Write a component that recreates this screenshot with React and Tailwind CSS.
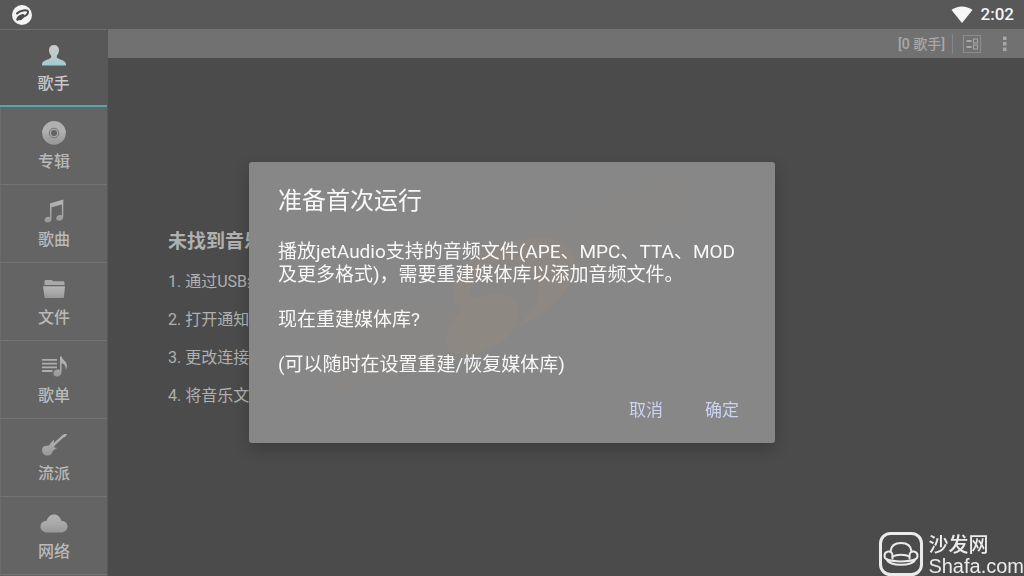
import { useState } from "react";

const tabs = [
  { id: "artists", label: "歌手", Icon: ArtistIcon },
  { id: "albums", label: "专辑", Icon: DiscIcon },
  { id: "songs", label: "歌曲", Icon: SongIcon },
  { id: "folders", label: "文件", Icon: FolderIcon },
  { id: "playlists", label: "歌单", Icon: PlaylistIcon },
  { id: "genres", label: "流派", Icon: GuitarIcon },
  { id: "network", label: "网络", Icon: CloudIcon },
];

const steps = [
  "通过USB线连接电脑",
  "打开通知栏",
  "更改连接方式",
  "将音乐文件复制到设备",
];

function ArtistIcon() {
  return (
    <svg width="28" height="28" viewBox="0 0 28 28" aria-hidden="true">
      <defs>
        <linearGradient id="artist" x1="0" y1="0" x2="0" y2="1">
          <stop offset="0" stopColor="#c6cccc" />
          <stop offset="0.5" stopColor="#bccccd" />
          <stop offset="1" stopColor="#9dcdd0" />
        </linearGradient>
      </defs>
      <path
        fill="url(#artist)"
        d="M14 4c3.100 0 5 2 5 5 0 2.300-.9 4.400-2.200 5.800-.3 1.900.2 2.400 2.200 3.100 3.800 1.300 7 2.700 7 5.300V24.500H2v-1.300c0-2.600 3.200-4 7-5.300 2-.7 2.500-1.200 2.200-3.100C9.900 13.400 9 11.300 9 9c0-3 1.900-5 5-5z"
      />
    </svg>
  );
}

function GreyGradient({ id }) {
  return (
    <defs>
      <linearGradient id={id} x1="0" y1="0" x2="0" y2="1">
        <stop offset="0" stopColor="#b4b4b4" />
        <stop offset="0.5" stopColor="#a9a9a9" />
        <stop offset="1" stopColor="#989898" />
      </linearGradient>
    </defs>
  );
}

function DiscIcon() {
  return (
    <svg width="28" height="28" viewBox="0 0 28 28" aria-hidden="true">
      <GreyGradient id="disc" />
      <circle cx="14" cy="14" r="11.800" fill="url(#disc)" />
      <path d="M2.200 14a11.800 11.800 0 0 1 23.600 0z" fill="#b0b0b0" />
      <circle cx="14" cy="14" r="4.800" fill="#a6a6a6" stroke="#777" />
      <circle cx="14" cy="14" r="3" fill="#626262" />
    </svg>
  );
}

function SongIcon() {
  return (
    <svg width="28" height="28" viewBox="0 0 28 28" aria-hidden="true">
      <GreyGradient id="song" />
      <path
        fill="url(#song)"
        d="M10 6.500 23.300 2.500V20c0 2.300-1.800 3.700-4 3.700-1.900 0-3.100-1-3.100-2.500 0-2 1.900-3.300 4-3.300.6 0 1.200.1 1.700.3V7.500L11.500 10.300V22c0 2.200-1.900 3.500-4 3.500-1.800 0-3-.9-3-2.400 0-2 1.900-3.300 3.900-3.300.6 0 1.100.1 1.600.3z"
      />
    </svg>
  );
}

function FolderIcon() {
  return (
    <svg width="28" height="28" viewBox="0 0 28 28" aria-hidden="true">
      <GreyGradient id="folder" />
      <path
        fill="#a9a9a9"
        d="M4.500 10V6.500c0-1 .5-1.500 1.500-1.500h5.500c1 0 1 1.300 2 1.300h9c1.500 0 2 .5 2 1.700v2z"
      />
      <path fill="url(#folder)" d="M3 11.200h22L24 22c-.1.800-.5 1-1.300 1H5.800c-.8 0-1.200-.2-1.300-1z" />
    </svg>
  );
}

function PlaylistIcon() {
  return (
    <svg width="28" height="28" viewBox="0 0 28 28" aria-hidden="true">
      <GreyGradient id="playlist" />
      <path d="M2 6h15v1.800H2zM2 9.700h15v1.800H2zM2 13.400h15v1.800H2zM2 17.100h10.500v1.800H2z" fill="#adadad" />
      <path
        fill="url(#playlist)"
        d="M20 3.500h1.600c.5 3.500 5.400 4.500 5.400 9 0 1.600-.5 3-1.400 4.200.5-4-1.600-5.900-4-6.800V19c0 2.600-2.200 4.500-4.700 4.500-2.100 0-3.500-1.200-3.500-3 0-2.400 2.200-4 4.600-4 .7 0 1.400.1 2 .4z"
      />
    </svg>
  );
}

function GuitarIcon() {
  return (
    <svg width="28" height="28" viewBox="0 0 28 28" aria-hidden="true">
      <GreyGradient id="guitar" />
      <path
        fill="url(#guitar)"
        d="M27 3c-2-.2-4 .3-5.300 1.900l-8 7.200c-.2-1.300.9-2.400.1-3.400-1 1.400-3.400 2.800-3.800 4.600-.4 1.400-1.900 1.300-3.800 1.500C3.300 15 2 16.700 2 18.900 2 22.200 4.500 24.500 7.500 24.500c3 0 4.600-1.700 5-3.600.4-1.900 1.500-2.300 4.800-4-1.200-.3-2.600.1-3-.7-.2-.8.3-1.600 1-2.200l7.500-7c2-.7 3.600-2.200 4.200-4z"
      />
    </svg>
  );
}

function CloudIcon() {
  return (
    <svg width="28" height="28" viewBox="0 0 28 28" aria-hidden="true">
      <GreyGradient id="cloud" />
      <path
        fill="url(#cloud)"
        d="M7.300 23.500C3.300 23.500.5 21 .5 17.500c0-3.300 2.600-5.600 6.200-5.700C7.600 8 10.400 5.500 14 5.500s6.400 2.500 7.300 6.300c3.600.1 6.200 2.400 6.200 5.700 0 3.500-2.800 6-6.800 6z"
      />
    </svg>
  );
}

function StatusBar() {
  return (
    <header className="flex h-[29px] items-center justify-between bg-[#585858] pr-[10px] pl-3">
      <svg width="20" height="20" viewBox="0 0 20 20" aria-hidden="true">
        <circle cx="10" cy="10" r="10" fill="#f4f4f4" />
        <g fill="none" stroke="#4c4c4c" strokeLinecap="round">
          <path strokeWidth="2" d="M5 8.500C7.500 5.500 15.500 4 16 6.800c.3 2.200-2.500 4.400-5.500 5" />
          <path strokeWidth="2.600" d="M5.500 14.500c.6-2.300 2.500-3.700 5.500-4.200M6 14c2 .3 4-.8 5-2.400" />
        </g>
      </svg>
      <div className="flex items-center gap-2">
        <svg width="22" height="18" viewBox="0 0 22 18" aria-hidden="true">
          <path fill="#f7f7f7" d="M0.500 4C6.500-.8 15.500-.8 21.500 4L11 17z" />
        </svg>
        <time className="text-[17px] leading-[29px] font-medium text-[#f4f4f4]">2:02</time>
      </div>
    </header>
  );
}

function Toolbar() {
  return (
    <div className="flex h-[29px] items-center justify-end bg-[#717171] pr-2 text-[#a8a8a8]">
      <span className="text-[14px] leading-5 font-medium">[0 歌手]</span>
      <span className="ml-[7px] h-5 w-px bg-[#868686]" />
      <button type="button" aria-label="视图" className="ml-2 p-px">
        <svg width="20" height="20" viewBox="0 0 20 20" fill="none" stroke="currentColor" aria-hidden="true">
          <rect x="1.500" y="1.500" width="17" height="17" strokeDasharray="1 1" strokeWidth="1.200" />
          <path d="M4.500 7h5M4.500 13h5" strokeWidth="2" />
          <rect x="11.500" y="5" width="4" height="4" />
          <rect x="11.500" y="11" width="4" height="4" />
        </svg>
      </button>
      <button type="button" aria-label="更多" className="ml-[11px] px-1">
        <svg width="14" height="20" viewBox="0 0 14 20" fill="currentColor" aria-hidden="true">
          <path d="M5 2.500h3.500V6H5zM5 8h3.500v3.500H5zM5 13.500h3.500V17H5z" />
        </svg>
      </button>
    </div>
  );
}

function Sidebar({ active, onSelect }) {
  return (
    <nav className="w-[108px] shrink-0 border-r border-[#575757] bg-[#646464]">
      {tabs.map(({ id, label, Icon }) => (
        <button
          key={id}
          type="button"
          onClick={() => onSelect(id)}
          className={
            active === id
              ? "flex h-[78px] w-full flex-col items-center border-t border-b-2 border-t-[#6e6e6e] border-b-[#56a5a8] bg-[#585858] pt-[11px] text-[#c8c8c8]"
              : "flex h-[78px] w-full flex-col items-center border-b border-l border-b-[#737373] border-l-[#6c6c6c] pt-3 text-[#b9b9b9]"
          }
        >
          <Icon />
          <span className="mt-[5px] text-[16px] leading-5 font-medium">{label}</span>
        </button>
      ))}
    </nav>
  );
}

function DialogArt() {
  return (
    <svg
      className="absolute top-0 left-0 h-full w-full"
      viewBox="0 0 526 281"
      aria-hidden="true"
    >
      <path
        fill="#8a8782"
        opacity="0.3"
        d="M258 78C300 76 390 20 439 8l-4 54c-40 2-80 40-117 66-60 44-150 92-237 103V131c40 20 80 16 123 12 6-30 24-50 54-65z"
      />
      <path
        fill="#928981"
        opacity="0.6"
        d="M204 134c0-26 22-47 48-49 14-8 32-10 46-9 22 2 31 14 28 31-4 24-28 46-58 58 14-14 24-28 22-42-2-18-24-30-44-24-16 6-26 20-26 34 6 4 12 2 18 0 16-4 30 2 31 16 1 20-16 34-34 40-14 4-30 6-36-2-4-16 4-32 19-44-8 0-14-3-14-9z"
      />
    </svg>
  );
}

function RebuildDialog({ onClose }) {
  return (
    <div className="fixed inset-0 flex items-center justify-center pt-[29px]">
      <section
        role="dialog"
        aria-labelledby="dialog-title"
        className="relative w-[526px] overflow-hidden rounded-[3px] bg-[#878787] px-[29px] pt-6 pb-[17px] text-[#f8f8f8] shadow-[0_6px_16px_rgba(0,0,0,0.2)]"
      >
        <DialogArt />
        <div className="relative">
          <h2 id="dialog-title" className="text-[24px] leading-[30px]">
            准备首次运行
          </h2>
          <div className="mt-6 space-y-[22px] text-[19px] leading-[23px]">
            <p>播放jetAudio支持的音频文件(APE、MPC、TTA、MOD及更多格式)，需要重建媒体库以添加音频文件。</p>
            <p>现在重建媒体库?</p>
            <p>(可以随时在设置重建/恢复媒体库)</p>
          </div>
          <div className="mt-[18px] flex justify-end gap-7 text-[17px] leading-6 text-[#ccd3f0]">
            <button type="button" onClick={onClose} className="px-[7px] py-1">
              取消
            </button>
            <button type="button" onClick={onClose} className="px-[7px] py-1">
              确定
            </button>
          </div>
        </div>
      </section>
    </div>
  );
}

function Watermark() {
  return (
    <div className="fixed right-0 bottom-0 flex gap-[5px] text-[#ebebeb]">
      <svg width="44" height="44" viewBox="0 0 44 44" fill="none" stroke="currentColor" aria-hidden="true">
        <rect x="1.500" y="1.500" width="41" height="41" rx="10" strokeWidth="3" />
        <g strokeWidth="2" strokeLinecap="round" strokeLinejoin="round">
          <path d="M11.500 19.500C12 14 16 11 22 11s10 3 10.500 8.500" />
          <path d="M8 27.500c-3.500-1.500-3.500-7 1-8 3-.5 4.500 1.500 4.500 4v3M36 27.500c3.500-1.500 3.500-7-1-8-3-.5-4.500 1.500-4.500 4v3" />
          <path d="M13.500 24.500c4-2.500 13-2.500 17 0" />
          <path d="M8 27.500c7 2.500 21 2.500 28 0-1.500 7-26.500 7-28 0z" />
        </g>
      </svg>
      <div className="pt-[3px]">
        <p className="text-[20px] leading-[21px] font-medium">沙发网</p>
        <p className="font-['Liberation_Sans',sans-serif] text-[20px] leading-5">Shafa.com</p>
      </div>
    </div>
  );
}

export default function App() {
  const [active, setActive] = useState("artists");
  const [showDialog, setShowDialog] = useState(true);

  return (
    <div className="flex h-screen flex-col overflow-hidden bg-[#4b4b4b] font-['Roboto','Noto_Sans_CJK_SC',sans-serif]">
      <StatusBar />
      <div className="flex min-h-0 flex-1">
        <Sidebar active={active} onSelect={setActive} />
        <main className="flex-1">
          <Toolbar />
          <div className="px-[60px] pt-[172px] text-[#b0b0b0]">
            <h1 className="text-[19px] leading-6 font-bold">未找到音乐</h1>
            <ol className="mt-4 space-y-[14px] text-[16px] leading-6">
              {steps.map((step, i) => (
                <li key={step}>
                  {i + 1}. {step}
                </li>
              ))}
            </ol>
          </div>
        </main>
      </div>
      {showDialog && <RebuildDialog onClose={() => setShowDialog(false)} />}
      <Watermark />
    </div>
  );
}
